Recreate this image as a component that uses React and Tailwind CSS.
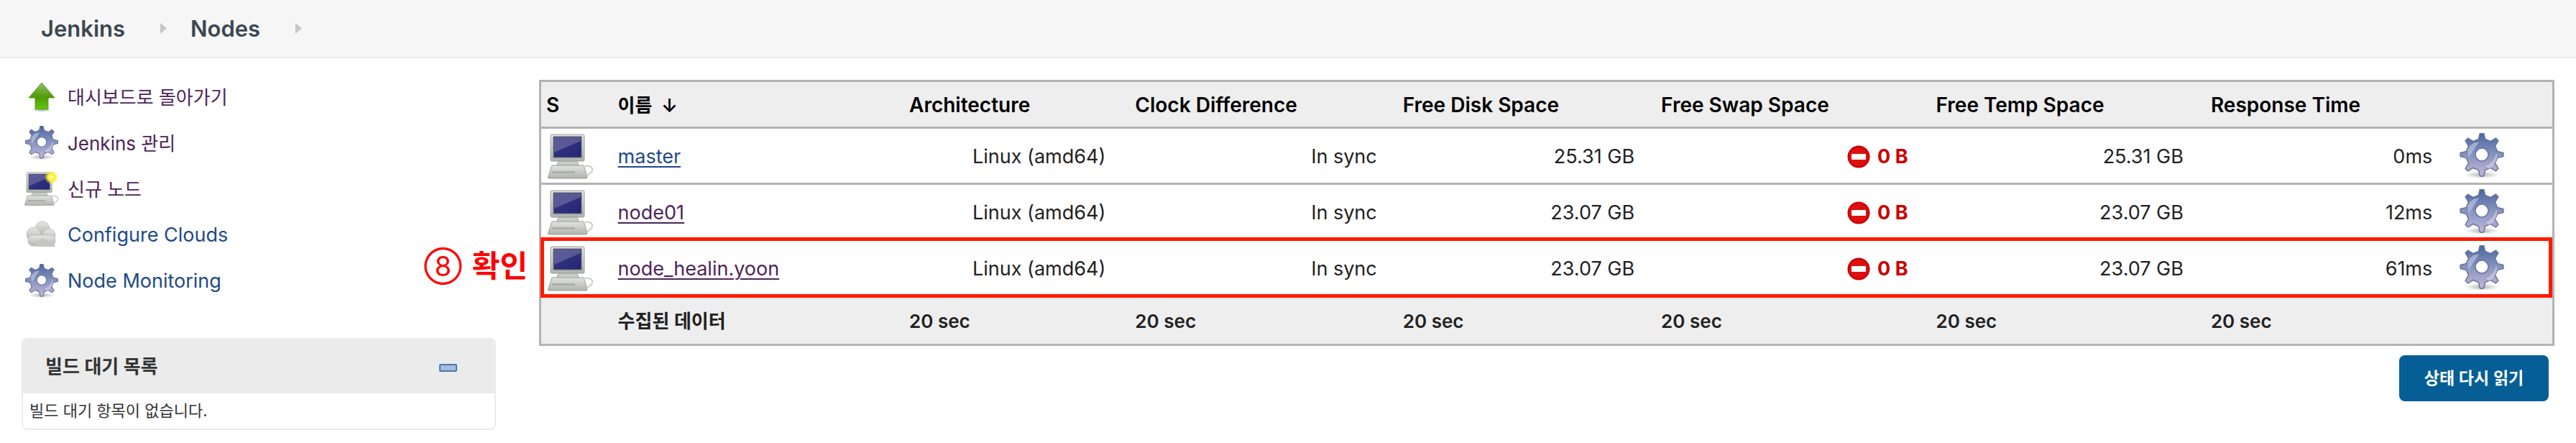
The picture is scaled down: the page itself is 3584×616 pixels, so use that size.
import React from 'react';

const FONT = 'font-["Inter","Noto_Sans_CJK_KR",sans-serif]';

function gearPath(cx, cy, outer, root, teeth) {
  const pts = [];
  const step = (Math.PI * 2) / teeth;
  for (let i = 0; i < teeth; i++) {
    const a = -Math.PI / 2 + i * step;
    const at = (r, d) => `${(cx + r * Math.cos(a + d)).toFixed(2)} ${(cy + r * Math.sin(a + d)).toFixed(2)}`;
    pts.push(`${i === 0 ? 'M' : 'L'}${at(root, -step * 0.27)}`);
    pts.push(`L${at(outer, -step * 0.11)}`);
    pts.push(`L${at(outer, step * 0.11)}`);
    pts.push(`L${at(root, step * 0.27)}`);
  }
  return pts.join(' ') + ' Z';
}

function Gear({ className }) {
  return (
    <svg viewBox="0 0 64 64" className={`${className} blur-[0.6px]`}>
      <defs>
        <linearGradient id="gearFill" x1="0" y1="0" x2="0" y2="1">
          <stop offset="0" stopColor="#4a659f" />
          <stop offset="0.45" stopColor="#7f8fbd" />
          <stop offset="1" stopColor="#c2b8da" />
        </linearGradient>
        <radialGradient id="gearShadow">
          <stop offset="0" stopColor="#000" stopOpacity="0.3" />
          <stop offset="1" stopColor="#000" stopOpacity="0" />
        </radialGradient>
      </defs>
      <ellipse cx="32" cy="58" rx="24" ry="5" fill="url(#gearShadow)" />
      <path d={gearPath(32, 30, 30, 22, 8)} fill="url(#gearFill)" stroke="#6a7396" strokeWidth="1.5" strokeLinejoin="round" />
      <path d="M12 24 C16 14 24 12 28 13 C24 18 20 24 14 34 Z" fill="#c3cde6" opacity="0.6" />
      <path d="M38 46 C46 42 50 36 52 28 C56 34 50 46 42 50 Z" fill="#dcd6ea" opacity="0.55" />
      <circle cx="32" cy="30" r="9" fill="#fff" stroke="#6a7396" strokeWidth="1.5" />
    </svg>
  );
}

function Computer({ className, fresh }) {
  return (
    <svg viewBox="0 0 64 64" className={`${className} blur-[0.4px]`}>
      <defs>
        <linearGradient id="pcBody" x1="0" y1="0" x2="0" y2="1">
          <stop offset="0" stopColor="#e2e3e0" />
          <stop offset="1" stopColor="#b0b3ad" />
        </linearGradient>
        <linearGradient id="pcScreen" x1="0" y1="0" x2="1" y2="1">
          <stop offset="0" stopColor="#3a3b85" />
          <stop offset="1" stopColor="#232474" />
        </linearGradient>
        <radialGradient id="pcStar">
          <stop offset="0" stopColor="#fffde0" />
          <stop offset="0.5" stopColor="#fcee21" />
          <stop offset="1" stopColor="#fcee21" stopOpacity="0" />
        </radialGradient>
      </defs>
      <path d="M16 37 H40 L44 45 H12 Z" fill="#c9cbc6" stroke="#a3a6a0" />
      <path d="M6 44 H50 L55 60 C55 62 54 62 53 62 H2 C0 62 0 61 1 59 Z" fill="url(#pcBody)" stroke="#9a9d97" />
      <path d="M6 52 H38 V55 H6 Z" fill="#8f928c" opacity="0.5" />
      <path d="M50 46 C57 43 63 46 62 51 C61 55 58 56 55 58" fill="none" stroke="#cdcfca" strokeWidth="2" />
      <rect x="4" y="1" width="47" height="37" rx="2" fill="url(#pcBody)" stroke="#9a9d97" />
      <rect x="8" y="4" width="39" height="29" fill="url(#pcScreen)" stroke="#6f7170" />
      <path d="M9 5 H46 V10 L9 26 Z" fill="#7a7aa8" opacity="0.55" />
      {fresh ? <circle cx="50" cy="10" r="13" fill="url(#pcStar)" /> : null}
    </svg>
  );
}

function UpArrow({ className }) {
  return (
    <svg viewBox="0 0 48 48" className={`${className} blur-[0.4px]`}>
      <defs>
        <linearGradient id="arrowFill" x1="0" y1="0" x2="0" y2="1">
          <stop offset="0" stopColor="#8cc46a" />
          <stop offset="0.55" stopColor="#4e9a06" />
          <stop offset="1" stopColor="#66c80c" />
        </linearGradient>
        <radialGradient id="arrowShadow">
          <stop offset="0" stopColor="#000" stopOpacity="0.3" />
          <stop offset="1" stopColor="#000" stopOpacity="0" />
        </radialGradient>
      </defs>
      <ellipse cx="24" cy="42" rx="15" ry="3" fill="url(#arrowShadow)" />
      <path d="M24 4 L42 25 H33 V41 H15 V25 H6 Z" fill="url(#arrowFill)" stroke="#4e8a1a" strokeWidth="0.8" strokeLinejoin="round" />
    </svg>
  );
}

function Cloud({ className }) {
  return (
    <svg viewBox="0 0 48 48" className={`${className} blur-[0.6px]`}>
      <defs>
        <linearGradient id="cloudFill" x1="0" y1="0" x2="0" y2="1">
          <stop offset="0" stopColor="#e6e6e4" />
          <stop offset="1" stopColor="#b4b5b2" />
        </linearGradient>
      </defs>
      <g fill="url(#cloudFill)" stroke="#b9bab7" strokeWidth="0.8">
        <circle cx="25" cy="15" r="10" />
        <circle cx="13" cy="23" r="10" />
        <circle cx="34" cy="24" r="9" />
        <rect x="5" y="24" width="38" height="15" rx="7" />
      </g>
      <path d="M16 34 C20 28 30 28 34 34 C40 30 44 36 42 40 H18 Z" fill="#c5c6c3" />
    </svg>
  );
}

function NoEntry({ className }) {
  return (
    <svg viewBox="0 0 32 32" className={className}>
      <circle cx="16" cy="16" r="15.5" fill="#cc0000" />
      <circle cx="16" cy="16" r="13" fill="#dc1010" />
      <rect x="6" y="12" width="20" height="8" rx="1" fill="#fff" />
    </svg>
  );
}

function Crumb({ children }) {
  return (
    <>
      <span className="text-[31px] leading-none font-semibold text-[#3c4750]">{children}</span>
      <svg viewBox="0 0 9 15" className="mr-[33px] ml-[49px] h-[15px] w-[9px]"><path d="M0 0 L9 7.5 L0 15 Z" fill="#c4c6c8" /></svg>
    </>
  );
}

const sideLinks = [
  { label: '대시보드로 돌아가기', icon: <UpArrow className="h-12 w-12" />, color: 'text-[#4d2459]', size: 'text-[26px]' },
  { label: 'Jenkins 관리', icon: <Gear className="h-12 w-12" />, color: 'text-[#4d2459]', size: 'text-[26px]' },
  { label: '신규 노드', icon: <Computer className="h-12 w-12" fresh />, color: 'text-[#4d2459]', size: 'text-[26px]' },
  { label: 'Configure Clouds', icon: <Cloud className="h-12 w-12" />, color: 'text-[#204a87]', size: 'text-[27px]' },
  { label: 'Node Monitoring', icon: <Gear className="h-12 w-12" />, color: 'text-[#204a87]', size: 'text-[27px]' },
];

const nodes = [
  { name: 'master', color: 'text-[#204a87]', disk: '25.31 GB', temp: '25.31 GB', time: '0ms' },
  { name: 'node01', color: 'text-[#4d2459]', disk: '23.07 GB', temp: '23.07 GB', time: '12ms' },
  { name: 'node_healin.yoon', color: 'text-[#4d2459]', disk: '23.07 GB', temp: '23.07 GB', time: '61ms' },
];

const headers = ['Architecture', 'Clock Difference', 'Free Disk Space', 'Free Swap Space', 'Free Temp Space', 'Response Time'];
const widths = [100, 406, 314, 372, 359, 382, 382, 349, 134];

export default function App() {
  return (
    <div className={`${FONT} h-[616px] overflow-hidden bg-white text-[26px] text-[#222]`}>
      <header className="flex h-[81px] items-center border-b-2 border-[#e9eef1] bg-[#f6f6f7] pl-[57px]">
        <Crumb>Jenkins</Crumb>
        <Crumb>Nodes</Crumb>
      </header>

      <main className="relative flex">
        <aside className="w-[750px] shrink-0 pt-[22px]">
          {sideLinks.map((link) => (
            <div key={link.label} className="flex h-[64px] items-center gap-[12px] pl-[34px]">
              {link.icon}
              <span className={`${link.color} ${link.size}`}>{link.label}</span>
            </div>
          ))}

          <div className="mt-[47px] ml-[30px] w-[660px] overflow-hidden rounded-lg border-2 border-[#ebebeb]">
            <div className="flex h-[75px] items-center justify-between bg-[#ebebeb] pr-[52px] pl-[31px]">
              <span className="font-semibold text-[#333]">빌드 대기 목록</span>
              <span className="mt-[4px] h-[11px] w-[25px] rounded-[2px] border-2 border-[#4a77b4] bg-[#a3bddc]" />
            </div>
            <div className="flex h-[49px] items-center pl-[9px] text-[22px] text-[#333]">빌드 대기 항목이 없습니다.</div>
          </div>
        </aside>

        <section className="w-[2804px] pt-[30px]">
          <div className="relative">
            <table className="w-full table-fixed border-collapse border-[3px] border-[#b3b3b3] text-[27px]">
              <colgroup>
                {widths.map((w, i) => <col key={i} style={{ width: w }} />)}
              </colgroup>
              <thead>
                <tr className="h-[65px] bg-[#eeeeee] text-left text-[28px] text-black">
                  <th className="pt-[2px] pl-[7px] font-semibold">S</th>
                  <th className="pt-[2px] pl-[8px] text-[26px] font-semibold">이름 <span className="ml-[6px]">↓</span></th>
                  {headers.map((h) => <th key={h} className="pt-[2px] pl-[7px] font-semibold">{h}</th>)}
                  <th />
                </tr>
              </thead>
              <tbody>
                {nodes.map((node) => (
                  <tr key={node.name} className="h-[78px] border-t-[3px] border-[#b3b3b3]">
                    <td className="pt-[3px] pl-[9px]"><Computer className="h-[64px] w-[64px]" /></td>
                    <td className="pt-[3px] pl-[8px] text-[27px]">
                      <a className={`${node.color} underline decoration-2 underline-offset-[4px]`}>{node.name}</a>
                    </td>
                    <td className="pt-[3px] pr-[34px] text-right">Linux (amd64)</td>
                    <td className="pt-[3px] pr-[29px] text-right">In sync</td>
                    <td className="pt-[3px] pr-[30px] text-right">{node.disk}</td>
                    <td className="pt-[3px] pr-[32px]">
                      <div className="flex items-center justify-end gap-[10px] font-bold text-[#cc0000]">
                        <NoEntry className="h-[32px] w-[32px]" />0 B
                      </div>
                    </td>
                    <td className="pt-[3px] pr-[31px] text-right">{node.temp}</td>
                    <td className="pt-[3px] pr-[34px] text-right">{node.time}</td>
                    <td className="pl-[3px]"><Gear className="h-[64px] w-[64px]" /></td>
                  </tr>
                ))}
                <tr className="h-[68px] border-t-[3px] border-[#b3b3b3] bg-[#eeeeee] text-[26px] font-semibold">
                  <td />
                  <td className="pt-[2px] pl-[8px]">수집된 데이터</td>
                  {headers.map((h) => <td key={h} className="pt-[2px] pl-[7px]">20 sec</td>)}
                  <td />
                </tr>
              </tbody>
            </table>
            {/* red annotation round the new node */}
            <div className="pointer-events-none absolute top-[219px] right-[3px] left-[2px] h-[84px] border-[5px] border-[#ff1a00]" />
            <div className="absolute top-[238px] -left-[160px] flex items-center gap-[14px] leading-none font-bold whitespace-nowrap text-[#fe0000]">
              <span className="text-[38px] font-normal">⑧</span>
              <span className="text-[42px]">확인</span>
            </div>
          </div>

          <div className="mt-[13px] flex justify-end pr-[8px]">
            <button className="h-[64px] w-[208px] rounded-lg bg-[#055f96] text-[23px] font-semibold text-white">상태 다시 읽기</button>
          </div>
        </section>
      </main>
    </div>
  );
}
